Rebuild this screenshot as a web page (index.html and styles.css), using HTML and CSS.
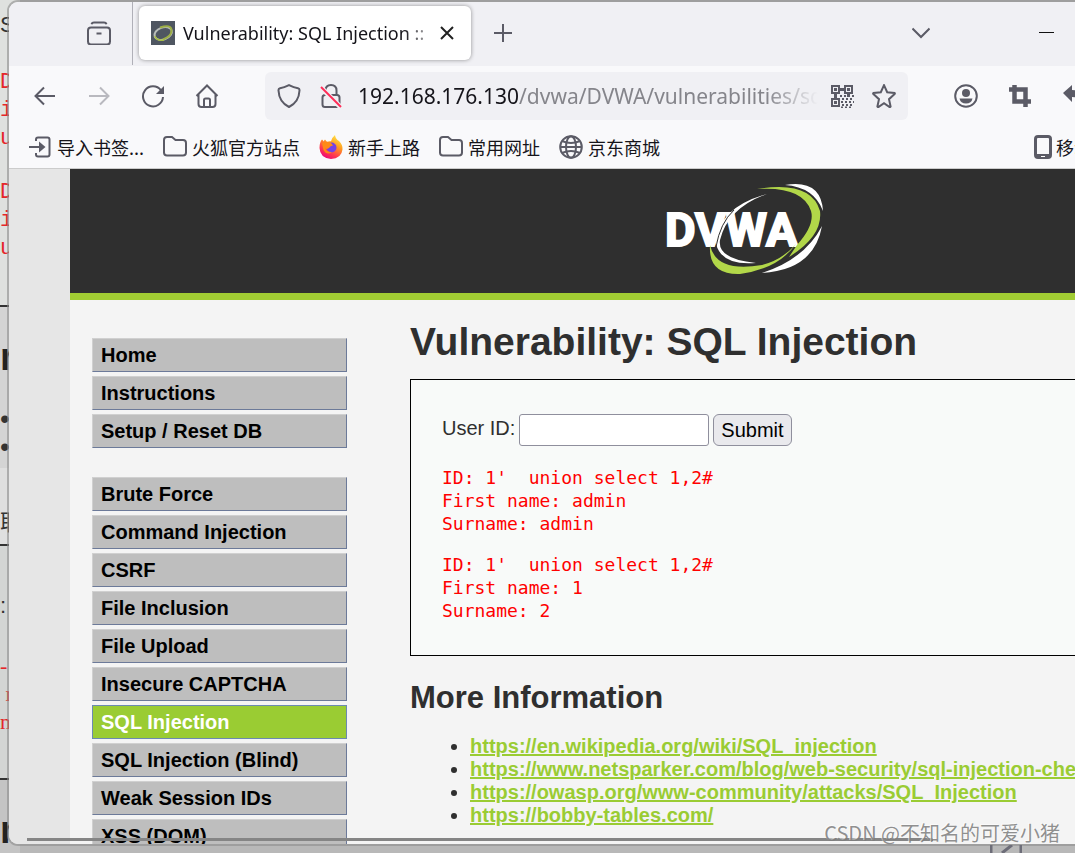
FILE: index.html
```html
<!DOCTYPE html>
<html lang="zh-CN">
<head>
<meta charset="utf-8">
<title>Vulnerability: SQL Injection</title>
<link rel="stylesheet" href="styles.css">
</head>
<body>
<div class="desktop">
  <div class="behind" aria-hidden="true">
    <div class="behind-block behind-a">
      <span class="behind-ui">S</span>
      <pre class="behind-pre">D
i
u</pre>
      <pre class="behind-pre">D
i
u</pre>
    </div>
    <div class="behind-block behind-b">
      <b class="behind-title">r</b>
      <span class="behind-dot">•</span>
      <span class="behind-dot">•</span>
    </div>
    <div class="behind-block behind-c">取</div>
    <div class="behind-block behind-d">
      <span class="behind-colon">:</span>
      <pre class="behind-pre behind-serif">-
 r
ne</pre>
    </div>
    <div class="behind-block behind-e"><b class="behind-title">n</b></div>
  </div>

  <main class="window">
    <div class="tabs">
      <button class="icon-btn view-btn" aria-label="Firefox View">
        <svg class="icon" viewBox="0 0 24 24"><path d="M4.500 3.200q.5-1.700 2.500-1.700h10q2 0 2.500 1.700"/><rect x="1" y="6.500" width="22" height="17" rx="3"/><path d="M9.500 12.500h5"/></svg>
      </button>
      <div class="tab">
        <svg class="favicon" viewBox="0 0 24 24"><rect width="24" height="24" fill="#4f5661"/><ellipse cx="12" cy="12.500" rx="9" ry="6" transform="rotate(-20 12 12)" fill="none" stroke="#b9beba" stroke-width="2"/><path d="M9 6.500Q20 3 20.500 9T12 18.500" fill="none" stroke="#9cae45" stroke-width="2"/><path d="M4 15q1 5 9 4" fill="none" stroke="#a6bd45" stroke-width="1.500"/></svg>
        <span class="tab-title">Vulnerability: SQL Injection ::</span>
        <button class="icon-btn close-btn" aria-label="Close tab"><svg class="icon-s" viewBox="0 0 14 14"><path d="M1 1l12 12M13 1L1 13"/></svg></button>
      </div>
      <button class="icon-btn plus-btn" aria-label="New tab"><svg class="icon-m" viewBox="0 0 18 18"><path d="M9 0v18M0 9h18"/></svg></button>
      <button class="icon-btn list-btn" aria-label="List tabs"><svg class="icon-m" viewBox="0 0 18 18"><path d="M.5 4.500l8.500 8.500 8.500-8.500"/></svg></button>
      <button class="icon-btn min-btn" aria-label="Minimize"><svg class="icon-m" viewBox="0 0 18 18"><path d="M2 8.500h15" stroke="#111" stroke-width="1"/></svg></button>
    </div>

    <div class="toolbar">
      <button class="icon-btn" aria-label="Back"><svg class="icon" viewBox="0 0 24 24"><path d="M22 12H2M11 3.500L2.500 12l8.500 8.500"/></svg></button>
      <button class="icon-btn faded" aria-label="Forward"><svg class="icon" viewBox="0 0 24 24"><path d="M2 12h20M13 3.500l8.500 8.500-8.500 8.500"/></svg></button>
      <button class="icon-btn" aria-label="Reload"><svg class="icon" viewBox="0 0 24 24"><path d="M20 6.300A10 10 0 1 0 22 13"/><path d="M23 2v8h-8z" fill="#5b5b66" stroke="none"/></svg></button>
      <button class="icon-btn" aria-label="Home"><svg class="icon" viewBox="0 0 24 24"><path d="M1.500 12L12 1.500 22.500 12M3.500 10.500V20q0 3 3 3h11q3 0 3-3v-9.500M9 23v-7q0-1.500 1.500-1.500h3q1.500 0 1.500 1.500v7"/></svg></button>
      <div class="urlbar">
        <svg class="icon" viewBox="0 0 24 24"><path d="M12 1.200Q17 3.700 21 4.300q1.700.4 1.500 2.200Q22 18 12 23 2 18 1.500 6.500 1.300 4.700 3 4.300 7 3.700 12 1.200z"/></svg>
        <svg class="icon lock" viewBox="0 0 24 24"><path d="M6.500 11V6.500Q6.500 1 12 1t5.500 5.500V11"/><rect x="3.500" y="11" width="17" height="12" rx="2.500"/><path d="M1 2.500l21 21" stroke="#f0f0f4" stroke-width="5"/><path d="M2 3l20 20" stroke="#ff2c57"/></svg>
        <span class="url"><span class="host">192.168.176.130</span>/dvwa/DVWA/vulnerabilities/sqli/</span>
        <svg class="icon qr" viewBox="0 0 24 24"><path d="M2 2h7v7H2zM15 2h7v7h-7zM2 15h7v7H2z"/><path d="M5.500 4v3M18.500 4v3M5.500 17v3M9 5.500h6M5.500 9v6M18.500 9v4" stroke-width="3"/><path d="M10 12h14M12 15h12M11 18h13M12 21h12M11 23.500h12" stroke-dasharray="2 2"/></svg>
        <svg class="icon star" viewBox="0 0 24 24"><path d="M12 1.200l3.200 7 7.400.8q.6.500 0 1L17 15.200l1.600 7.300q-.4.700-1 .5L12 19.200 6.400 23q-.8.200-1-.5L7 15.200 1.400 10q-.6-.6 0-1l7.400-.8z"/></svg>
      </div>
      <div class="tools">
        <button class="icon-btn" aria-label="Account"><svg class="icon" viewBox="0 0 24 24"><circle cx="12" cy="12" r="10.800"/><circle cx="12" cy="9" r="4" fill="#5b5b66" stroke="none"/><path d="M5.500 14.500h13q-1 5-6.500 5t-6.500-5z" fill="#5b5b66" stroke="none"/></svg></button>
        <button class="icon-btn" aria-label="Screenshot"><svg class="icon" viewBox="0 0 24 24"><path d="M6.500 1v16.500H23M1 5.500h16.500V23" stroke-width="4.500"/></svg></button>
        <button class="icon-btn edge" aria-label="Undo"><svg class="icon" viewBox="0 0 24 24"><path d="M1 9l9-8v5q12 0 12 15-3-8-12-8v5z" fill="#5b5b66" stroke="none"/></svg></button>
      </div>
    </div>

    <nav class="bookmarks">
      <a href="#"><svg class="icon" viewBox="0 0 24 24"><path d="M8 6V4.500Q8 2.500 10 2.500h9.500q2 0 2 2v15q0 2-2 2H10q-2 0-2-2V18M1 12h14"/><path d="M11 6.500l6.500 5.500-6.500 5.500z" fill="#5b5b66" stroke="none"/></svg>导入书签...</a>
      <a href="#"><svg class="icon" viewBox="0 0 24 24"><path d="M4 2h5l3.500 3H20q3 0 3 3v9.500q0 3-3 3H4q-3 0-3-3V5q0-3 3-3z"/></svg>火狐官方站点</a>
      <a href="#"><svg class="icon fox" viewBox="0 0 24 24"><defs><linearGradient id="flame" x1=".85" y1="0" x2=".3" y2="1"><stop offset="0" stop-color="#fff44f"/><stop offset=".4" stop-color="#ff9b20"/><stop offset=".75" stop-color="#ff3750"/><stop offset="1" stop-color="#eb0878"/></linearGradient></defs><path d="M3 4.500q.8.300 1.500 2l1.500-2q1 1.500 2 2.300Q10 6 12 6.300 12.500 3 16 0q.5 4 4 6 4 4 3.500 8.500Q22.500 23.500 12 24 1 23 .5 13 .5 7 3 4.500z" fill="url(#flame)"/><circle cx="12.500" cy="12.500" r="5" fill="#7542e5"/><path d="M3 8q5-2 9 0 1 1 2 2.500-3 .5-3.500 2-2.500 2.500-4.500.5Q8 17.500 13 17 8 21 4.500 15z" fill="#ff8a16"/></svg>新手上路</a>
      <a href="#"><svg class="icon" viewBox="0 0 24 24"><path d="M4 2h5l3.500 3H20q3 0 3 3v9.500q0 3-3 3H4q-3 0-3-3V5q0-3 3-3z"/></svg>常用网址</a>
      <a href="#"><svg class="icon" viewBox="0 0 24 24"><circle cx="12" cy="12" r="10.800"/><ellipse cx="12" cy="12" rx="5" ry="10.800"/><path d="M1 12h22M3 6q9 4 18 0M3 18q9-4 18 0"/></svg>京东商城</a>
      <a href="#" class="mobile"><svg class="phone" viewBox="0 0 18 24"><rect x="1.500" y="1.500" width="15" height="21" rx="2.500" fill="none" stroke="#5b5b66" stroke-width="3"/><path d="M2 21h14" stroke="#5b5b66" stroke-width="4"/><path d="M7 21.500h4" stroke="#fff" stroke-width="1"/></svg>移动设备上的书签</a>
    </nav>

    <div class="viewport">
      <div class="page">
        <header class="banner">
          <svg class="logo" viewBox="0 0 160 92" role="img" aria-label="DVWA">
            <path d="M102 11Q63 25 55 57q-3 19 36 23Q57 83 51 61 52 25 102 11z" fill="#fff"/>
            <text x="0" y="63" class="logo-text">DVWA</text>
            <path d="M69 27Q55 40 51 64" fill="none" stroke="#2f2f2f" stroke-width="1"/>
            <path d="M92 6Q146-3 155 28q3 25-31 46l8-12q18-20 14-34Q138 3 92 6z" fill="#b2d749"/>
            <path d="M45 62q6 28 52 20 20-5 34-21-18 25-56 30Q43 92 45 62z" fill="#b2d749"/>
            <path d="M120 2q36-6 38 26Q149 4 120 2zM157 43q-8 44-60 47 43-14 60-47z" fill="#fff"/>
          </svg>
        </header>
        <div class="columns">
          <nav class="menu">
            <ul>
              <li><a href="#">Home</a></li>
              <li><a href="#">Instructions</a></li>
              <li><a href="#">Setup / Reset DB</a></li>
            </ul>
            <ul>
              <li><a href="#">Brute Force</a></li>
              <li><a href="#">Command Injection</a></li>
              <li><a href="#">CSRF</a></li>
              <li><a href="#">File Inclusion</a></li>
              <li><a href="#">File Upload</a></li>
              <li><a href="#">Insecure CAPTCHA</a></li>
              <li><a href="#" class="selected">SQL Injection</a></li>
              <li><a href="#">SQL Injection (Blind)</a></li>
              <li><a href="#">Weak Session IDs</a></li>
              <li><a href="#">XSS (DOM)</a></li>
            </ul>
          </nav>
          <section class="body">
            <h1>Vulnerability: SQL Injection</h1>
            <div class="vulnerable">
              <form class="query">
                <label for="uid">User ID:</label>
                <input id="uid" type="text">
                <button type="button">Submit</button>
              </form>
              <pre>ID: 1'  union select 1,2#
First name: admin
Surname: admin</pre>
              <pre>ID: 1'  union select 1,2#
First name: 1
Surname: 2</pre>
            </div>
            <h2>More Information</h2>
            <ul class="links">
              <li><a href="#">https://en.wikipedia.org/wiki/SQL_injection</a></li>
              <li><a href="#">https://www.netsparker.com/blog/web-security/sql-injection-cheat-sheet/</a></li>
              <li><a href="#">https://owasp.org/www-community/attacks/SQL_Injection</a></li>
              <li><a href="#">https://bobby-tables.com/</a></li>
            </ul>
          </section>
        </div>
      </div>
      <div class="scroll-line"></div>
    </div>
  </main>
  <svg class="corner-icon" viewBox="0 0 32 8"><path d="M1 0v8M31 0v8M12 8L22 0" fill="none" stroke="#6d6d78" stroke-width="3"/></svg>
  <div class="watermark">CSDN @不知名的可爱小猪</div>
</div>
</body>
</html>
```
FILE: styles.css
```css
* { box-sizing: border-box; }
body { margin: 0; font-family: "Liberation Sans", "Noto Sans CJK SC", sans-serif; }
ul, pre, h1, h2 { margin: 0; padding: 0; }

.desktop {
  position: relative;
  display: flex;
  height: 100vh;
  padding-bottom: 7px;
  overflow: hidden;
  background: #b8b8b8;
}

/* Sliver of the page behind the browser window */
.behind {
  position: absolute;
  inset: 0 auto 0 0;
  width: 20px;
  display: flex;
  flex-direction: column;
  color: #333;
}
.behind-block { flex: none; }
.behind-block > * { display: block; }
.behind-a { height: 307px; background: #dfe1df; border-bottom: 2px solid #333; }
.behind-b { height: 161px; padding-top: 28px; background: #d4d4d4; }
.behind-c { height: 78px; padding-top: 36px; background: #dfdfdf; border-bottom: 2px solid #333; font-size: 22px; }
.behind-d { height: 234px; padding-top: 46px; background: #d3d5d4; border-bottom: 2px solid #333; }
.behind-e { flex: 1; padding-top: 28px; background: #c4c4c4; }
.behind-ui { height: 69px; padding-top: 12px; font-size: 22px; line-height: 26px; }
.behind-pre { height: 110px; font: 22px/28px "Liberation Mono", monospace; color: #e5262a; }
.behind-serif { font-family: "Liberation Serif", serif; padding-top: 30px; }
.behind-title { height: 70px; font-size: 38px; line-height: 44px; color: #222; }
.behind-e .behind-title { height: 44px; }
.behind-dot { font-size: 28px; line-height: 28px; }
.behind-colon { height: 30px; font-size: 22px; line-height: 28px; }

.window {
  position: relative;
  flex: 1;
  min-width: 0;
  display: flex;
  flex-direction: column;
  margin-left: 7px;
  border: 2px solid rgba(140, 140, 140, .6);
  border-right: 0;
  border-radius: 11px 0 0 11px;
  overflow: hidden;
  background: #f9f9fb;
  background-clip: padding-box;
}

.icon-btn { flex: none; display: flex; padding: 0; border: 0; background: none; }
.icon, .icon-m, .icon-s { flex: none; fill: none; stroke: #5b5b66; stroke-width: 2; }
.icon { width: 24px; height: 24px; }
.icon-m { width: 18px; height: 18px; }
.icon-s { width: 14px; height: 14px; stroke: #222; }
.faded { opacity: .4; }

.tabs { flex: none; display: flex; align-items: center; height: 64px; padding-bottom: 2px; background: #f0f0f4; }
.view-btn { height: 64px; width: 124px; padding-left: 78px; align-items: center; border-right: 1px solid #b0b0b8; }
.tab {
  display: flex;
  align-items: center;
  width: 332px;
  height: 54px;
  margin-left: 6px;
  padding: 0 17px 0 12px;
  border-radius: 6px;
  background: #fff;
  box-shadow: 0 0 4px rgba(0, 0, 0, .4);
}
.favicon { flex: none; width: 24px; height: 24px; }
.tab-title {
  flex: 1;
  margin-left: 8px;
  overflow: hidden;
  white-space: nowrap;
  font: 18px "Noto Sans", sans-serif;
  color: #15141a;
  mask-image: linear-gradient(to left, transparent, #000 36px);
}
.plus-btn { margin-left: 23px; }
.list-btn { margin-left: auto; }
.min-btn { margin: 0 20px 0 107px; }

.toolbar { flex: none; display: flex; align-items: center; gap: 30px; height: 62px; padding: 0 0 2px 24px; }
.urlbar {
  flex: 1;
  min-width: 0;
  display: flex;
  align-items: center;
  height: 48px;
  margin: 0 16px;
  padding: 0 12px;
  border-radius: 6px;
  background: #f0f0f4;
}
.lock { margin-left: 18px; }
.url {
  flex: 1;
  margin: 0 12px 0 15px;
  overflow: hidden;
  white-space: nowrap;
  font: 21px "Noto Sans", sans-serif;
  color: #85858b;
  mask-image: linear-gradient(to left, transparent, #000 52px);
}
.host { color: #15141a; }
.star { margin-left: 18px; }
.tools { display: flex; gap: 30px; }
.edge { width: 13px; overflow: hidden; }

.bookmarks {
  flex: none;
  display: flex;
  align-items: center;
  gap: 19px;
  height: 41px;
  padding: 0 0 3px 19px;
  border-bottom: 1px solid #ccc;
}
.bookmarks a {
  display: flex;
  align-items: center;
  gap: 5px;
  font: 18px/24px "Noto Sans CJK SC", sans-serif;
  white-space: nowrap;
  color: #15141a;
  text-decoration: none;
}
.fox { stroke: none; }
.bookmarks .mobile { width: 41px; gap: 4px; margin-left: auto; overflow: hidden; }
.phone { flex: none; width: 18px; height: 24px; }

/* Web page */
.viewport { position: relative; flex: 1; min-height: 0; overflow: hidden; padding-left: 61px; background: #e6e6e6; }
.page { min-width: 1350px; min-height: 100%; background: #f4f4f4; color: #2f2f2f; font-size: 20px; }
.banner {
  display: flex;
  justify-content: center;
  padding: 14px 0 18px;
  background: #2f2f2f;
  border-bottom: 7px solid #a1cc33;
}
.logo { width: 160px; height: 92px; }
.logo-text { font: bold 47px Roboto, sans-serif; fill: #fff; stroke: #fff; stroke-width: 2; }
.columns { display: flex; align-items: flex-start; padding: 0 22px; }

.menu { width: 255px; padding-top: 38px; }
.menu ul { display: grid; gap: 4px; margin-bottom: 29px; list-style: none; }
.menu a {
  display: block;
  padding: 0 8px;
  border: 1px solid;
  border-color: #d0d0d0 #6c7a99 #6c7a99 #d0d0d0;
  background: #bebebe;
  font-weight: bold;
  line-height: 32px;
  color: #000;
  text-decoration: none;
}
.menu .selected { border-color: #6c8ab0; background: #9acc33; color: #fff; }

.body { flex: 1; min-width: 0; margin-left: 63px; }
h1 { margin: 19px 0 14px; font-size: 39px; line-height: 46px; }
h2 { margin: 24px 0 19px; font-size: 31px; line-height: 36px; }
.vulnerable { padding: 34px 31px 33px; border: 1px solid #000; background: #f8faf9; }
.query { display: flex; align-items: center; gap: 4px; margin-bottom: 20px; }
.query label { line-height: 28px; padding-bottom: 4px; }
.query input { width: 190px; height: 32px; border: 1px solid #8f8f9d; border-radius: 3px; background: #fff; font-size: 20px; }
.query button {
  height: 32px;
  padding: 0 7px;
  border: 1px solid #8f8f9d;
  border-radius: 6px;
  background: #e9e9ed;
  font: 20px "Liberation Sans", sans-serif;
  color: #000;
}
.vulnerable pre { font: 18px/23px "DejaVu Sans Mono", monospace; color: #f00; }
.vulnerable pre + pre { margin-top: 18px; }
.links { padding-left: 60px; line-height: 23px; }
.links a { font-weight: bold; color: #9acc33; }

.scroll-line { position: absolute; left: 18px; bottom: 3px; width: 85%; height: 3px; background: #858585; }
.corner-icon { position: absolute; right: 53px; bottom: 0; width: 32px; height: 8px; }
.watermark {
  position: absolute;
  right: 15px;
  bottom: 6px;
  font: 20px/28px "Noto Sans CJK SC", sans-serif;
  color: rgba(125, 125, 125, .85);
  text-shadow: -1px -1px 0 rgba(255, 255, 255, .6);
}
```
